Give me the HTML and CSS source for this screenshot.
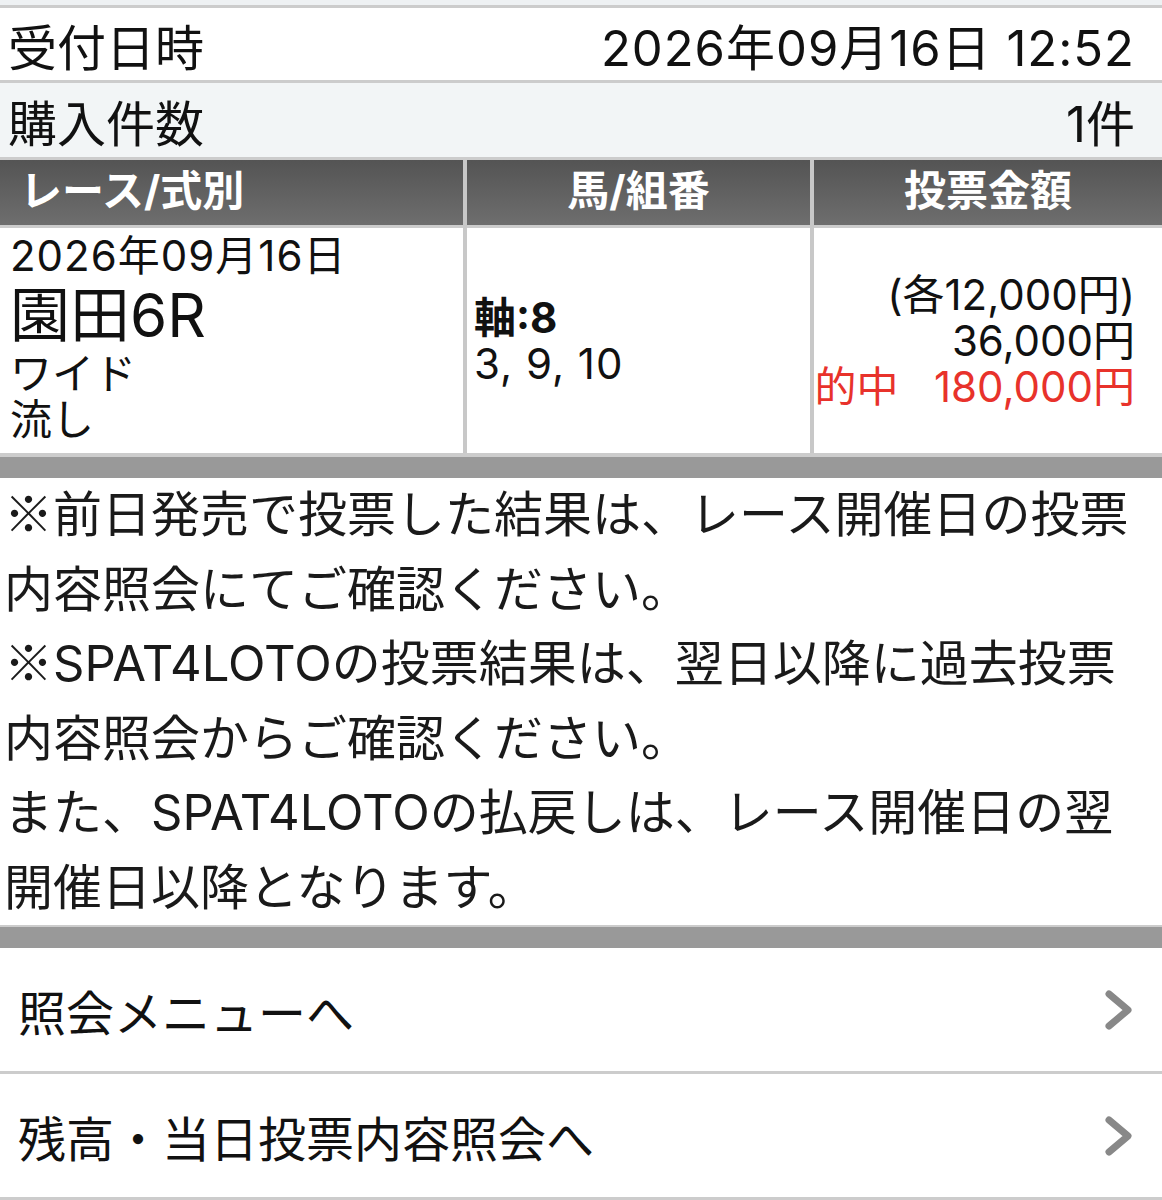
FILE: index.html
```html
<!DOCTYPE html>
<html lang="ja">
<head>
    <meta charset="UTF-8">
    <meta name="viewport" content="width=device-width, initial-scale=1.0">
    <title>投票内容照会</title>
    <link rel="stylesheet" href="styles.css">
</head>
<body>
    <div class="top-gap"></div>

    <div class="info-row">
        <span>受付日時</span>
        <span class="num">2026年09月16日 12:52</span>
    </div>
    <div class="info-row info-row-alt">
        <span>購入件数</span>
        <span>1件</span>
    </div>

    <div class="bet-table">
        <div class="th th-left">レース/式別</div>
        <div class="th">馬/組番</div>
        <div class="th">投票金額</div>

        <div class="td td-race">
            <div class="num">2026年09月16日</div>
            <div class="race-name">園田6R</div>
            <div>ワイド</div>
            <div>流し</div>
        </div>
        <div class="td td-horse">
            <div class="axis">軸:8</div>
            <div class="num">3, 9, 10</div>
        </div>
        <div class="td td-amount">
            <div>(各12,000円)</div>
            <div>36,000円</div>
            <div class="hit">的中&nbsp;&nbsp;&nbsp;180,000円</div>
        </div>
    </div>

    <div class="divider"></div>

    <div class="notes">
        <p><span class="mark">※</span>前日発売で投票した結果は、レース開催日の投票<br>内容照会にてご確認ください。</p>
        <p><span class="mark">※</span>SPAT4LOTOの投票結果は、翌日以降に過去投票<br>内容照会からご確認ください。<br>また、SPAT4LOTOの払戻しは、レース開催日の翌<br>開催日以降となります。</p>
    </div>

    <div class="divider"></div>

    <nav class="menu">
        <a class="menu-item" href="#">
            <span>照会メニューへ</span>
            <svg class="chevron" width="30" height="42" viewBox="0 0 30 42" fill="none" stroke="currentColor" stroke-width="7" stroke-linecap="round" stroke-linejoin="round">
                <polyline points="5,5 24,21 5,37"></polyline>
            </svg>
        </a>
        <a class="menu-item" href="#">
            <span>残高・当日投票内容照会へ</span>
            <svg class="chevron" width="30" height="42" viewBox="0 0 30 42" fill="none" stroke="currentColor" stroke-width="7" stroke-linecap="round" stroke-linejoin="round">
                <polyline points="5,5 24,21 5,37"></polyline>
            </svg>
        </a>
    </nav>
</body>
</html>
```

FILE: styles.css
```css
:root {
    --line: #cccccc;
    --bar: #999999;
    --alt-bg: #f2f5f6;
    --text: #111111;
    --red: #e8322b;
    --font-cjk: "Noto Sans CJK JP", sans-serif;
    --font-main: Inter, var(--font-cjk);
}

* {
    box-sizing: border-box;
    margin: 0;
    padding: 0;
}

body {
    font-family: var(--font-main);
    color: var(--text);
    background: #ffffff;
}

.top-gap {
    height: 8px;
    background: #eef1f3;
    border-bottom: 3px solid var(--line);
}

.info-row {
    display: flex;
    justify-content: space-between;
    align-items: center;
    height: 75px;
    padding: 0 27px 0 8px;
    font-size: 49px;
    border-bottom: 3px solid var(--line);
}

.info-row-alt {
    height: 77px;
    background: var(--alt-bg);
}

.num {
    letter-spacing: 1px;
}

.bet-table {
    display: grid;
    grid-template-columns: 463px 343px 1fr;
    column-gap: 4px;
    background: #c8c8c8;
    border-bottom: 2px solid var(--line);
}

.th {
    height: 68px;
    border-bottom: 3px solid var(--line);
    background: linear-gradient(#545454, #6e6e6e);
    color: #ffffff;
    font-size: 42px;
    font-weight: 700;
    line-height: 62px;
    text-align: center;
}

.th-left {
    text-align: left;
    padding-left: 20px;
}

.td {
    background: #ffffff;
    font-size: 42px;
    line-height: 46px;
    height: 225px;
}

.td-race {
    padding: 5px 0 0 10px;
}

.race-name {
    font-size: 60px;
    line-height: 72px;
}

.td-horse,
.td-amount {
    display: flex;
    flex-direction: column;
    justify-content: center;
}

.td-horse {
    padding-left: 7px;
}

.axis {
    font-weight: 700;
}

.td-amount {
    text-align: right;
    padding-right: 27px;
}

.hit {
    color: var(--red);
}

.divider {
    height: 23px;
    background: var(--bar);
    border-top: 2px solid var(--line);
}

.notes {
    padding-left: 4px;
    font-size: 49px;
    line-height: 74.5px;
    color: #1a1a1a;
    white-space: nowrap;
}

.mark {
    font-family: var(--font-cjk);
    line-height: 1;
}

.menu-item {
    display: flex;
    justify-content: space-between;
    align-items: center;
    height: 126px;
    padding: 0 28px 0 18px;
    border-bottom: 3px solid var(--line);
    color: var(--text);
    text-decoration: none;
    font-size: 48px;
}

.chevron {
    color: #888888;
}
```
